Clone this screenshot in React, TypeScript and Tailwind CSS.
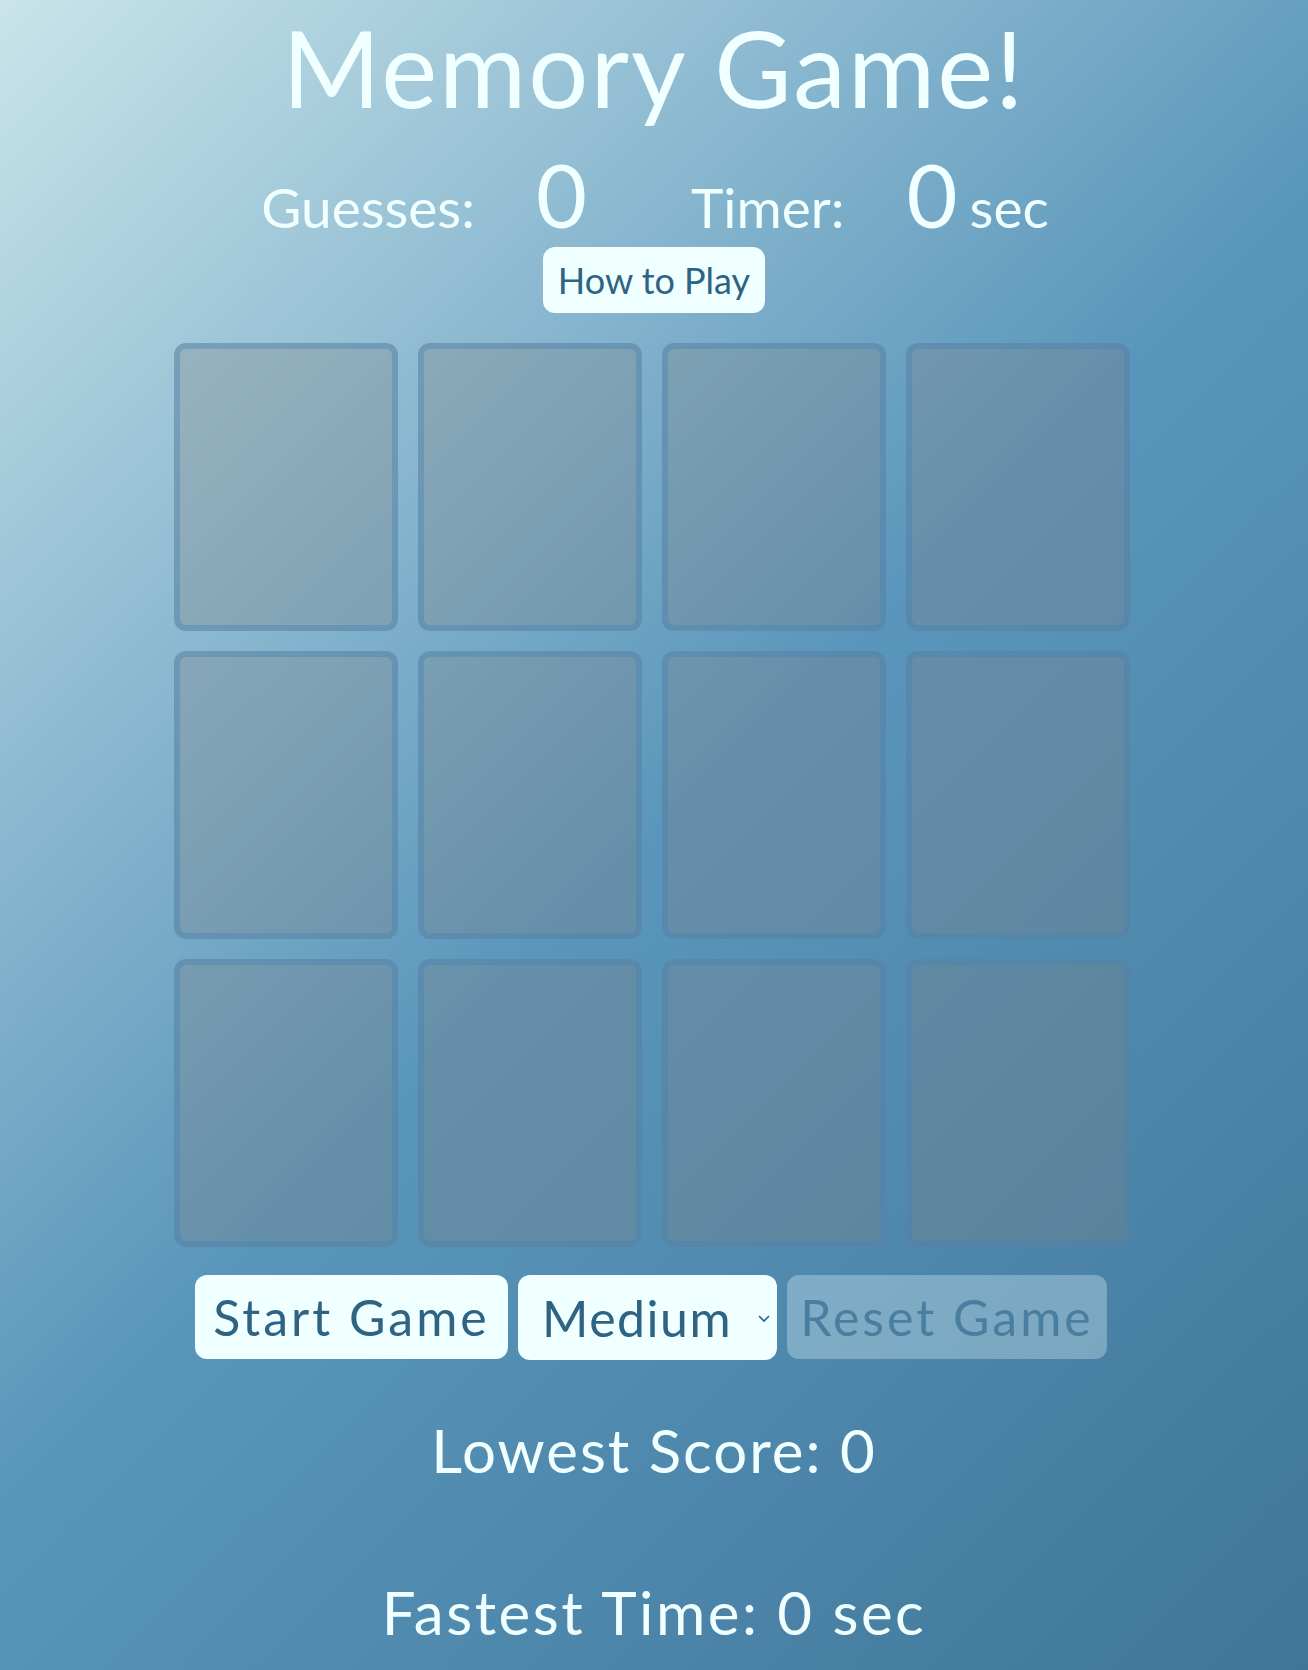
import React from 'react';

const cards = Array.from({ length: 12 }, (_, i) => i);

export default function App() {
  return (
    <div
      className="min-h-[1670px] w-full bg-[linear-gradient(135deg,#c9e4ea_0%,#5a96bb_50%,#3f7699_100%)] text-[#f0ffff]"
      style={{ fontFamily: 'Lato, "Noto Sans", sans-serif' }}
    >
      <div className="flex flex-col items-center">
        <h1 className="mt-[7px] text-[106px] leading-[120px] font-normal tracking-[2px]">Memory Game!</h1>

        <div className="mt-[23px] ml-[2px] flex items-baseline justify-center leading-none">
          <span className="text-[55px]">Guesses:</span>
          <span className="ml-[61px] text-[88px]">0</span>
          <span className="ml-[104px] text-[55px]">Timer:</span>
          <span className="ml-[62px] text-[88px]">0</span>
          <span className="ml-[12px] text-[55px]">sec</span>
        </div>

        <button className="mt-[9px] h-[66px] w-[222px] rounded-[12px] bg-[#f0ffff] text-[36px] text-[#2f6383]">
          How to Play
        </button>

        <div className="mt-[30px] ml-[-4px] grid grid-cols-[repeat(4,224px)] gap-[20px]">
          {cards.map(i => (
            <div
              key={i}
              className="h-[288px] rounded-[12px] border-[6px] border-[#4682b4]/40 bg-[#808080]/30"
            />
          ))}
        </div>

        <div className="mt-[28px] ml-[-6px] flex gap-[10px]">
          <button className="h-[84px] w-[313px] rounded-[12px] bg-[#f0ffff] text-[50px] tracking-[3px] text-[#2f6383]">
            Start Game
          </button>
          <div className="relative h-[85px] w-[259px] rounded-[12px] bg-[#f0ffff] text-[50px] tracking-[1.5px] text-[#2f6383]">
            <span className="absolute left-[24px] top-1/2 -translate-y-1/2">Medium</span>
            <svg
              className="absolute right-[6px] top-1/2 -translate-y-1/2"
              width="14"
              height="10"
              viewBox="0 0 14 10"
              fill="none"
              stroke="#2f6383"
              strokeWidth="1.6"
            >
              <path d="M2 3l5 5 5-5" />
            </svg>
          </div>
          <button className="h-[84px] w-[320px] rounded-[12px] bg-[#f0ffff]/30 text-[50px] tracking-[3px] text-[#4a7ea0]">
            Reset Game
          </button>
        </div>

        <p className="mt-[60px] text-[60px] leading-none tracking-[2px]">Lowest Score: 0</p>
        <p className="mt-[102px] text-[60px] leading-none tracking-[2.5px]">Fastest Time: 0 sec</p>
      </div>
    </div>
  );
}
